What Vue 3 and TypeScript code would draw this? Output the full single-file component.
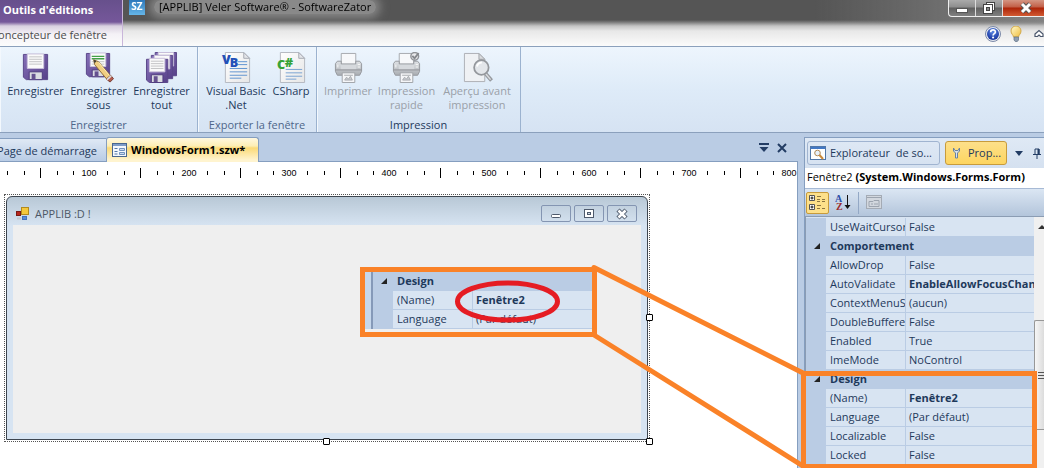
<script setup lang="ts">
interface Tool {
  icon: string
  lines: string[]
  width: string
  disabled?: boolean
}
interface Group {
  title: string
  tools: Tool[]
  dim?: boolean
}
interface Row {
  name: string
  value?: string
  bold?: boolean
  category?: boolean
}

const groups: Group[] = [
  {
    title: 'Enregistrer',
    dim: true,
    tools: [
      { icon: 'floppy', lines: ['Enregistrer'], width: 'w-m' },
      { icon: 'floppy-edit', lines: ['Enregistrer', 'sous'], width: 'w-m' },
      { icon: 'floppies', lines: ['Enregistrer', 'tout'], width: 'w-m' },
    ],
  },
  {
    title: 'Exporter la fenêtre',
    dim: true,
    tools: [
      { icon: 'vb', lines: ['Visual Basic', '.Net'], width: 'w-l' },
      { icon: 'cs', lines: ['CSharp'], width: 'w-s' },
    ],
  },
  {
    title: 'Impression',
    tools: [
      { icon: 'printer', lines: ['Imprimer'], width: 'w-n', disabled: true },
      { icon: 'printer-check', lines: ['Impression', 'rapide'], width: 'w-m', disabled: true },
      { icon: 'preview', lines: ['Aperçu avant', 'impression'], width: 'w-xl', disabled: true },
    ],
  },
]

const rows: Row[] = [
  { name: 'UseWaitCursor', value: 'False' },
  { name: 'Comportement', category: true },
  { name: 'AllowDrop', value: 'False' },
  { name: 'AutoValidate', value: 'EnableAllowFocusChange', bold: true },
  { name: 'ContextMenuStrip', value: '(aucun)' },
  { name: 'DoubleBuffered', value: 'False' },
  { name: 'Enabled', value: 'True' },
  { name: 'ImeMode', value: 'NoControl' },
  { name: 'Design', category: true },
  { name: '(Name)', value: 'Fenêtre2', bold: true },
  { name: 'Language', value: '(Par défaut)' },
  { name: 'Localizable', value: 'False' },
  { name: 'Locked', value: 'False' },
]

const insetRows: Row[] = rows.slice(8, 11)

const hundreds = [1, 2, 3, 4, 5, 6, 7, 8]
const shortTicks = [-82, -65, -32, -16]
</script>

<template>
  <div class="app">
    <svg class="defs" width="0" height="0" aria-hidden="true">
      <defs>
        <linearGradient id="gPurple" x1="0" y1="0" x2="1" y2="1">
          <stop offset="0" stop-color="#8670b8" /><stop offset="1" stop-color="#574089" />
        </linearGradient>
        <linearGradient id="gPaper" x1="0" y1="0" x2="1" y2="1">
          <stop offset="0" stop-color="#ffffff" /><stop offset="1" stop-color="#e6e6e6" />
        </linearGradient>
        <linearGradient id="gGrey" x1="0" y1="0" x2="0" y2="1">
          <stop offset="0" stop-color="#dfe2e5" /><stop offset="1" stop-color="#a9adb2" />
        </linearGradient>
        <radialGradient id="gHelp" cx=".5" cy=".3" r=".7">
          <stop offset="0" stop-color="#5d8ae6" /><stop offset="1" stop-color="#14309a" />
        </radialGradient>
        <linearGradient id="gBulb" x1="0" y1="0" x2="1" y2="1">
          <stop offset="0" stop-color="#fffbd0" /><stop offset="1" stop-color="#f0bd3c" />
        </linearGradient>
      </defs>
      <symbol id="floppy" viewBox="0 0 32 32">
        <path d="M3.5 2.500h25v26h-22l-3-2.500z" fill="url(#gPurple)" stroke="#5a4688" />
        <path d="M7.500 2h17v15h-17z" fill="#fafafa" stroke="#c9c1db" />
        <path d="M9.500 5h13M9.500 7.500h13M9.500 10h13M9.500 12.500h13" stroke="#c2c2c4" />
        <path d="M9.500 20.500h13.500v8h-13.500z" fill="#dcdde2" stroke="#4d3a7d" />
        <path d="M12 22.500h4v6h-4z" fill="#65518f" />
      </symbol>
      <symbol id="floppy-edit" viewBox="0 0 32 32">
        <path d="M3.500 1.500h24v24h-21l-3-2.500z" fill="url(#gPurple)" stroke="#5a4688" />
        <path d="M7.500 1h16v14h-16z" fill="#fafafa" stroke="#c9c1db" />
        <path d="M9 4.500h13M9 7h13" stroke="#43a047" stroke-width="1.500" />
        <path d="M9 10h13M9 12.500h13" stroke="#c2c2c4" />
        <path d="M9.500 18.500h12v7h-12z" fill="#dcdde2" stroke="#4d3a7d" />
        <path d="M12 20h4v5h-4z" fill="#65518f" />
        <path d="M11 8l5 2 12.500 14.500-4 3.500L12 13z" fill="#f0ce82" stroke="#8a6836" />
        <path d="M16 10.500L28 25" stroke="#fff0b8" />
        <path d="M24 28l4.500-4 3 3.500-3.500 3.500z" fill="#b45b4d" stroke="#754037" />
        <path d="M24 28l4.500-4 1.200 1.400-4.500 4z" fill="#dddddd" />
        <path d="M11 8l1 3.500 1.800-2z" fill="#333" />
      </symbol>
      <symbol id="page" viewBox="0 0 32 32">
        <path d="M4.500 .5h19l6 6v25h-25z" fill="url(#gPaper)" stroke="#b4b8c0" />
        <path d="M23.500 .5v6h6z" fill="#e4e6ea" stroke="#a5a9b2" />
      </symbol>
      <symbol id="printer" viewBox="0 0 32 32">
        <path d="M8.500 1.500h15v11h-15z" fill="#f7f8fa" stroke="#a6a9ae" />
        <path d="M4.500 9.500h4v3h15v-3h4l2 2.500v8l-2 4h-23l-2-4v-8z" fill="url(#gGrey)" stroke="#96999e" />
        <path d="M8 13h16v5H8z" fill="#d6d9dd" />
        <path d="M2.500 18.500h27" stroke="#8f9297" />
        <path d="M5 13v3M25.500 13h2.500M25.500 15.500h2.500" stroke="#f8f8f8" />
        <path d="M9.500 21.500h13v10h-13z" fill="#f5f6f8" stroke="#a0a3a8" />
        <path d="M11.500 24h9M12 29l2-3 2 2 2-3 2 4z" fill="#c8cbd0" stroke="#a9acb1" />
      </symbol>
    </svg>

    <header class="titlebar">
      <div class="context">
        <div class="context-title">Outils d'éditions</div>
        <button class="context-tab" type="button">Concepteur de fenêtre</button>
      </div>
      <div class="title-main">
        <div class="title-row">
          <span class="logo">SZ</span>
          <h1 class="title">[APPLIB] Veler Software® - SoftwareZator</h1>
          <div class="win-buttons">
            <button type="button" aria-label="Réduire">
              <svg width="14" height="14"><rect x="1.500" y="7.500" width="11" height="4" fill="#fff" stroke="#555" /></svg>
            </button>
            <button type="button" aria-label="Restaurer">
              <svg width="14" height="14"><rect x="4.500" y="1.500" width="8" height="8" fill="#fff" stroke="#444" /><rect x="1.500" y="3.500" width="9" height="9" fill="#fff" stroke="#444" /><rect x="4.500" y="6.500" width="3" height="3" fill="#8a8a8a" stroke="#444" /></svg>
            </button>
            <button class="close" type="button" aria-label="Fermer">
              <svg width="14" height="14" fill="none"><path d="M3 3l8 8M11 3l-8 8" stroke="#555" stroke-width="5" /><path d="M3 3l8 8M11 3l-8 8" stroke="#fff" stroke-width="3" /></svg>
            </button>
          </div>
        </div>
        <div class="help-row">
          <button type="button" aria-label="Aide">
            <svg width="16" height="16"><circle cx="8" cy="8" r="7.500" fill="#e8ebf2" stroke="#7b89a8" /><circle cx="8" cy="8" r="6" fill="url(#gHelp)" /><path d="M5.700 6.200c0-3 4.700-3 4.700-.2 0 1.600-2.300 1.700-2.300 3.400" fill="none" stroke="#fff" stroke-width="1.700" /><circle cx="8.100" cy="11.500" r="1.100" fill="#fff" /></svg>
          </button>
          <button type="button" aria-label="Astuce">
            <svg width="16" height="16"><path d="M5.500 11c0-2-2.500-3-2.500-6a5 5 0 0 1 10 0c0 3-2.500 4-2.500 6z" fill="url(#gBulb)" stroke="#d2a94a" /><path d="M6 11h4.500v3l-1.200 1.500h-2L6 14z" fill="#8f9eb0" stroke="#5f7186" stroke-width=".7" /></svg>
          </button>
          <button type="button" aria-label="Réduire le ruban">
            <svg width="16" height="16" fill="none"><path d="M4 8l4-3.500L12 8v2.500H9.500L8 9l-1.500 1.500H4z" fill="#fff" stroke="#4a566c" stroke-width="1.200" /></svg>
          </button>
        </div>
      </div>
    </header>

    <section class="ribbon" aria-label="Ruban">
      <div v-for="g in groups" :key="g.title" class="group">
        <div class="tools">
          <button v-for="t in g.tools" :key="t.icon" type="button" class="tool" :class="t.width" :disabled="t.disabled">
            <svg v-if="t.icon === 'floppy' || t.icon === 'floppy-edit'" class="icon" viewBox="0 0 32 32"><use :href="'#' + t.icon" /></svg>
            <svg v-else-if="t.icon === 'floppies'" class="icon wide" viewBox="0 0 34 32">
              <path d="M10.500 .5h22v24h-22z" fill="url(#gPurple)" stroke="#5a4688" />
              <path d="M13.500 .5h16v14h-16z" fill="#fafafa" stroke="#c9c1db" />
              <path d="M6.500 3.500h22v24h-22z" fill="url(#gPurple)" stroke="#5a4688" />
              <path d="M9.500 3.500h16v14h-16z" fill="#fafafa" stroke="#c9c1db" />
              <path d="M1.500 7.500h22v24h-19l-3-2.500z" fill="url(#gPurple)" stroke="#5a4688" />
              <path d="M4.500 6.500h16v14h-16z" fill="#fafafa" stroke="#c9c1db" />
              <path d="M6 9.500h13M6 12h13M6 14.500h13M6 17h13" stroke="#c2c2c4" />
              <path d="M6.500 23.500h12v8h-12z" fill="#dcdde2" stroke="#4d3a7d" />
              <path d="M9 25h4v6h-4z" fill="#65518f" />
            </svg>
            <svg v-else-if="t.icon === 'vb'" class="icon" viewBox="0 0 32 32">
              <use href="#page" />
              <path d="M17 10h10M17 13h10M9 17h18M9 20.500h18M9 24h18M9 27h12" stroke="#5f93cf" />
              <text class="glyph v" x="1" y="12">V</text><text class="glyph v" x="9" y="15">B</text>
            </svg>
            <svg v-else-if="t.icon === 'cs'" class="icon" viewBox="0 0 32 32">
              <use href="#page" />
              <path d="M10 18h17M10 21.500h17M10 25h17M10 28h11" stroke="#79a2d2" />
              <text class="glyph c" x="1" y="18">C</text><text class="glyph c" x="9" y="15">#</text>
            </svg>
            <svg v-else-if="t.icon === 'printer'" class="icon" viewBox="0 0 32 32"><use href="#printer" /></svg>
            <svg v-else-if="t.icon === 'printer-check'" class="icon" viewBox="0 0 32 32">
              <use href="#printer" />
              <circle cx="24.500" cy="4.500" r="4" fill="#e9eaec" stroke="#909398" stroke-width="1.500" />
              <path d="M22 4l2.300 2.500L28.500 1" fill="none" stroke="#85888d" stroke-width="2" />
            </svg>
            <svg v-else class="icon" viewBox="0 0 32 32">
              <path d="M2.500 1.500h15l6 6v23h-21z" fill="#eff1f4" stroke="#adb0b5" />
              <path d="M17.500 1.500v6h6z" fill="#d9dbde" stroke="#a2a5aa" />
              <path d="M24 22l6.500 7.500" stroke="#96999e" stroke-width="4" />
              <path d="M24.500 22.500l5 6" stroke="#dadcdf" stroke-width="1.500" />
              <circle cx="20" cy="16" r="7.500" fill="#e3e6ea" stroke="#94979c" stroke-width="1.800" />
              <path d="M15.500 15a5 5 0 0 1 5-4" fill="none" stroke="#fff" stroke-width="2" />
            </svg>
            <span v-for="l in t.lines" :key="l" class="tool-line">{{ l }}</span>
          </button>
        </div>
        <div class="group-title" :class="{ dim: g.dim }">{{ g.title }}</div>
      </div>
    </section>

    <div class="workspace">
      <main class="editor">
        <div class="doc-tabs">
          <button type="button" class="doc-tab start">Page de démarrage</button>
          <button type="button" class="doc-tab active">
            <svg width="15" height="14"><rect x=".5" y=".5" width="14" height="13" fill="#f4f8fd" stroke="#49678f" /><path d="M1 2h13" stroke="#7d9cc8" stroke-width="2" /><path d="M2.500 5.500h3M2.500 8.500h3M2.500 11h3" stroke="#5479a8" /><path d="M7.500 5.500h5v2h-5zM7.500 9.500h5v2h-5z" fill="#cddcf0" stroke="#7192bd" /></svg>
            WindowsForm1.szw*
          </button>
          <div class="doc-actions">
            <button type="button" aria-label="Documents ouverts">
              <svg width="12" height="12"><path d="M1 2h10" stroke="#223c64" stroke-width="2" /><path d="M1.500 5h9L6 10z" fill="#223c64" /></svg>
            </button>
            <button type="button" aria-label="Fermer le document">
              <svg width="12" height="12"><path d="M2 2l8 8M10 2l-8 8" stroke="#223c64" stroke-width="2" /></svg>
            </button>
          </div>
        </div>
        <div class="canvas">
          <svg class="ruler" height="18" aria-hidden="true">
            <g v-for="h in hundreds" :key="h" :transform="`translate(${h * 100 - 11} 0)`">
              <path v-for="s in shortTicks" :key="s" :d="`M${s + 0.5} 6v4`" />
              <path d="M-48.500 3v10" />
              <text x="0" y="11" text-anchor="middle">{{ h }}00</text>
            </g>
          </svg>
          <div class="selection">
            <div class="form">
              <div class="form-title">
                <svg width="14" height="13"><rect x="5.500" y=".5" width="7" height="7" fill="#f5c83c" stroke="#b38a1c" /><rect x=".5" y="4.500" width="4" height="4" fill="#b8271d" stroke="#7b1a15" /><rect x="6.500" y="9.500" width="4" height="3" fill="#5a8cd8" stroke="#4372bd" /><path d="M1 11.500h4" stroke="#c4c8ce" stroke-width="2" /></svg>
                <span class="form-name">APPLIB :D !</span>
                <button type="button" aria-label="Réduire la fenêtre"><svg width="12" height="12"><rect x="1.500" y="6.500" width="9" height="3" rx="1" fill="#fff" stroke="#4e5a6c" /></svg></button>
                <button type="button" aria-label="Agrandir la fenêtre"><svg width="12" height="12"><rect x="1.500" y="1.500" width="9" height="8" fill="#fff" stroke="#4e5a6c" /><rect x="4.500" y="4.500" width="3" height="2" fill="#cbd6e3" stroke="#4e5a6c" /></svg></button>
                <button type="button" aria-label="Fermer la fenêtre"><svg width="12" height="12"><path d="M2 2l8 8M10 2l-8 8" stroke="#4e5a6c" stroke-width="4.500" /><path d="M2.500 2.500l7 7M9.500 2.500l-7 7" stroke="#fff" stroke-width="2.500" /></svg></button>
              </div>
              <div class="form-client"></div>
            </div>
            <i class="handle right"></i><i class="handle bottom"></i><i class="handle corner"></i>
          </div>
          <div class="inset">
            <table class="props">
              <colgroup><col class="c-gutter" /><col class="c-name" /><col /></colgroup>
              <tbody>
                <tr v-for="r in insetRows" :key="r.name" :class="{ category: r.category }">
                  <td class="gutter"><svg v-if="r.category" width="6" height="6"><path d="M6 0v6H0z" fill="#222" /></svg></td>
                  <th :colspan="r.category ? 2 : 1" scope="row">{{ r.name }}</th>
                  <td v-if="!r.category" :class="{ bold: r.bold }">{{ r.value }}</td>
                </tr>
              </tbody>
            </table>
          </div>
        </div>
      </main>

      <aside class="panel">
        <div class="panel-tabs">
          <button type="button" class="panel-tab explorer">
            <svg width="16" height="15"><rect x=".5" y=".5" width="15" height="13" fill="#fff" stroke="#5177a8" /><path d="M1 2h14" stroke="#4278c4" stroke-width="2" /><circle cx="7.500" cy="7" r="2.800" fill="#e8f2fc" stroke="#b28a56" /><path d="M9.500 9l3.500 4" stroke="#c98a3c" stroke-width="2" /></svg>
            Explorateur&nbsp; de so...
          </button>
          <button type="button" class="panel-tab current">
            <svg width="9" height="12"><path d="M1.500 1v3l2 2v5h2V6l2-2V1L6 3.500H3z" fill="#d7e3f1" stroke="#68829f" /></svg>
            Prop...
          </button>
          <button type="button" class="mini" aria-label="Menu du volet"><svg width="8" height="5"><path d="M0 0h8L4 5z" fill="#223c64" /></svg></button>
          <button type="button" class="mini pin" aria-label="Épingler"><svg width="8" height="11" fill="none"><path d="M2 6V1h4v5M0 6.500h8M4 7v4" stroke="#223c64" /><path d="M5.500 1v5" stroke="#223c64" stroke-width="2" /></svg></button>
        </div>
        <button type="button" class="object-select" aria-haspopup="listbox">Fenêtre2 <b>(System.Windows.Forms.Form)</b></button>
        <div class="prop-tools">
          <button type="button" class="pt on" aria-label="Par catégorie">
            <svg width="17" height="17" fill="none"><path d="M.5 1.500h5v5h-5zM.5 10.500h5v5h-5z" fill="#fff" stroke="#555" /><path d="M1.500 4h3M3 2.500v3M1.500 13h3M3 11.500v3" stroke="#111" /><path d="M8 2.500h4M8 5.500h3M8 7.500h3M8 11.500h4M8 14.500h3M13 5.500h3M13 7.500h3M13 14.500h3" stroke="#8c7540" /></svg>
          </button>
          <button type="button" class="pt" aria-label="Alphabétique">
            <svg width="17" height="17"><text class="az a" x="0" y="8">A</text><text class="az z" x="1" y="16">Z</text><path d="M12.500 1v12" stroke="#111" /><path d="M9.500 11h6l-3 4z" fill="#111" /></svg>
          </button>
          <i class="divider"></i>
          <button type="button" class="pt" aria-label="Pages de propriétés" disabled>
            <svg width="16" height="15"><rect x=".5" y=".5" width="15" height="13" fill="#d2d7de" stroke="#a4abb5" /><path d="M1 2.500h14M3 6.500h4l1 -1h5v6H3z" fill="none" stroke="#9ca4af" /><path d="M5 9h2M8 9h4" stroke="#9ca4af" /></svg>
          </button>
        </div>
        <div class="prop-area">
          <table class="props">
            <colgroup><col class="c-gutter" /><col class="c-name" /><col /></colgroup>
            <tbody>
              <tr v-for="r in rows" :key="r.name" :class="{ category: r.category }">
                <td class="gutter"><svg v-if="r.category" width="6" height="6"><path d="M6 0v6H0z" fill="#222" /></svg></td>
                <th :colspan="r.category ? 2 : 1" scope="row">{{ r.name }}</th>
                <td v-if="!r.category" :class="{ bold: r.bold }">{{ r.value }}</td>
              </tr>
            </tbody>
          </table>
          <div class="scrollbar">
            <svg width="10" height="20"><path d="M4 12l4-4 4 4z" fill="#333" /></svg>
            <div class="thumb"><i></i><i></i><i></i></div>
          </div>
        </div>
      </aside>
    </div>

    <svg class="notes" width="1044" height="468" fill="none" aria-hidden="true">
      <g stroke="#fa8228" stroke-width="5">
        <rect x="362.500" y="269.500" width="232" height="65" />
        <rect x="803.500" y="373.500" width="231" height="93" />
        <path d="M594 267.500L803 373M594 335L803 466" stroke-linecap="round" />
      </g>
      <ellipse cx="507.500" cy="301.500" rx="50" ry="18.500" stroke="#e51c23" stroke-width="5" />
    </svg>
  </div>
</template>

<style>
html,
body {
  background: #bacde5;
}
</style>

<style scoped>
* {
  box-sizing: border-box;
}
.app {
  position: relative;
  display: flex;
  flex-direction: column;
  height: 100vh;
  overflow: hidden;
  background: #bacce4;
  color: #1e395b;
  font: 11px/14px 'Open Sans', 'Noto Sans', sans-serif;
}
button {
  margin: 0;
  padding: 0;
  border: 0;
  background: none;
  color: inherit;
  font: inherit;
}
svg {
  display: block;
  flex: none;
}
.defs {
  position: absolute;
}
.titlebar {
  display: flex;
  flex: none;
  height: 47px;
  border-bottom: 1px solid #8ba0bc;
  background: linear-gradient(#555 0, #555 20px, #777 22px, #c4c4c4 26px, #e8e8e8 31px, #fbfbfb 46px);
}
.context {
  width: 123px;
  border-right: 1px solid #c9b6da;
  background: linear-gradient(#67508c, #75579a 22px, #d9d0e0 26px, #f4f1f6 34px, #fcfcfc);
}
.context-title {
  padding: 3px 3px 0;
  height: 22px;
  color: #fff;
  font-weight: 700;
  white-space: nowrap;
}
.context-tab {
  display: flex;
  justify-content: flex-end;
  width: 100%;
  padding: 6px 15px 0 0;
  overflow: hidden;
  color: #4c4c4c;
  white-space: nowrap;
}
.title-main {
  display: flex;
  flex: 1;
  flex-direction: column;
  min-width: 0;
}
.title-row {
  display: flex;
  height: 24px;
  padding-left: 6px;
  background: linear-gradient(90deg, transparent 75%, rgba(200, 200, 200, 0.4));
  mask-image: linear-gradient(#000 20px, transparent);
}
.logo {
  width: 16px;
  height: 15px;
  background: linear-gradient(#2c78bc, #65b6e8);
  color: #fff;
  font-size: 10px;
  font-weight: 700;
  line-height: 13px;
  text-align: center;
}
.title {
  margin: 0 0 0 9px;
  padding: 0 5px;
  height: 14px;
  border-radius: 7px;
  background: rgba(190, 190, 190, 0.5);
  box-shadow: 0 0 10px 4px rgba(190, 190, 190, 0.5);
  color: #000;
  font-size: 11px;
  font-weight: 400;
  line-height: 14px;
  white-space: nowrap;
}
.win-buttons {
  display: flex;
  height: 17px;
  margin-left: auto;
  border: 1px solid #eee;
  border-width: 0 0 1px 1px;
  border-radius: 0 0 0 4px;
  background: linear-gradient(#aaa, #8e8e8e 7px, #606060 8px, #808080);
  overflow: hidden;
}
.win-buttons button {
  display: flex;
  align-items: center;
  justify-content: center;
  width: 27px;
  border-right: 1px solid #ddd;
}
.win-buttons .close {
  width: 41px;
  padding-left: 5px;
  border: 0;
  background: linear-gradient(#d49583, #c25f47 7px, #ac2409 8px, #d25a32);
}
.help-row {
  display: flex;
  flex: 1;
  justify-content: flex-end;
  gap: 7px;
  padding-top: 2px;
  margin-right: -3px;
}
.help-row button {
  height: 16px;
}
.ribbon {
  display: flex;
  flex: none;
  height: 86px;
  border-bottom: 1px solid #8ba0bc;
  background: linear-gradient(#edf5fd, #deebf8 50%, #d6e3f3);
}
.group {
  display: flex;
  flex-direction: column;
  justify-content: space-between;
  padding: 5px 4px 0;
  border-right: 1px solid #9bb2cf;
  box-shadow: inset 1px 0 #f3f8fd;
}
.tools {
  display: flex;
}
.tool {
  display: flex;
  flex-direction: column;
  align-items: center;
  justify-content: flex-start;
  white-space: nowrap;
}
.w-s { width: 42px; }
.w-n { width: 54px; }
.w-m { width: 63px; }
.w-l { width: 68px; }
.w-xl { width: 78px; }
.tool:disabled {
  color: #9aa0a8;
}
.icon {
  width: 31px;
  height: 31px;
  margin-bottom: 1px;
}
.icon.wide {
  width: 33px;
}
.tool-line {
  display: block;
  height: 14px;
}
.glyph {
  font-family: 'Open Sans', sans-serif;
  font-size: 13px;
  font-weight: 800;
}
.glyph.v { fill: #2350b8; }
.glyph.c { fill: #36a336; }
.group-title {
  color: #1e395b;
  text-align: center;
}
.group-title.dim {
  color: #4e668a;
}
.workspace {
  display: flex;
  flex: 1;
  min-height: 0;
}
.editor {
  display: flex;
  flex: 1;
  flex-direction: column;
  min-width: 0;
}
.doc-tabs {
  display: flex;
  flex: none;
  align-items: flex-end;
  height: 29px;
  border-bottom: 1px solid #859ebf;
}
.doc-tab {
  display: flex;
  align-items: center;
  white-space: nowrap;
}
.doc-tab.start {
  justify-content: flex-end;
  width: 106px;
  height: 23px;
  padding: 2px 9px 0 0;
  overflow: hidden;
  border: 1px solid #859ebf;
  border-width: 1px 0 0;
  background: linear-gradient(#dfe9f5, #b9cce5);
}
.doc-tab.active {
  gap: 4px;
  width: 153px;
  height: 25px;
  margin-bottom: -1px;
  padding: 0 0 0 5px;
  border: 1px solid #859ebf;
  border-bottom: 0;
  border-radius: 3px 3px 0 0;
  background: linear-gradient(#fff8e0, #fdeeb4 8px, #fbda77 10px, #fff4cf 22px);
  color: #000;
  font-weight: 700;
}
.doc-actions {
  display: flex;
  gap: 6px;
  margin-left: auto;
  padding: 0 10px 7px 0;
}
.canvas {
  position: relative;
  flex: 1;
  overflow: hidden;
  border-right: 1px solid #859ebf;
  background: #fff;
}
.ruler {
  width: 100%;
  margin-top: 3px;
}
.ruler path {
  stroke: #000;
}
.ruler text {
  fill: #000;
  font: 9px 'Liberation Sans', sans-serif;
}
.selection {
  position: relative;
  width: 646px;
  margin: 11px 0 0 4px;
  border: 1px dotted #555;
}
.form {
  display: flex;
  flex-direction: column;
  height: 244px;
  margin: 1px;
  padding: 0 6px 6px;
  border: 1px solid #3e4650;
  border-radius: 6px 6px 0 0;
  background: linear-gradient(#b8c8d6, #d7e4f2 29px);
}
.form-title {
  display: flex;
  align-items: center;
  gap: 4px;
  height: 28px;
  padding: 5px 5px 0 3px;
  color: #4d5866;
}
.form-name {
  flex: 1;
  padding-left: 1px;
}
.form-title button {
  display: flex;
  align-items: center;
  justify-content: center;
  width: 30px;
  height: 17px;
  margin-right: -1px;
  border: 1px solid #8495b2;
  border-radius: 2px;
}
.form-client {
  flex: 1;
  background: #efefef;
}
.handle {
  position: absolute;
  width: 7px;
  height: 7px;
  border: 1px solid #000;
  border-radius: 1px;
  background: #fff;
}
.handle.right { right: -4px; top: calc(50% - 4px); }
.handle.bottom { left: calc(50% - 4px); bottom: -4px; }
.handle.corner { right: -4px; bottom: -4px; }
.inset {
  position: absolute;
  top: 110px;
  left: 365px;
  width: 227px;
  padding-left: 6px;
  background: #c6d7eb;
}
.inset .props {
  border-left: 2px solid #8599b8;
}
.props {
  width: 100%;
  table-layout: fixed;
  border-collapse: separate;
  border-spacing: 0;
  background: #d8e4f2;
}
.c-gutter { width: 20px; }
.c-name { width: 80px; }
.props tr {
  height: 19px;
}
.props th,
.props td {
  height: 19px;
  padding: 0 0 0 4px;
  overflow: hidden;
  border-bottom: 1px solid #bacce4;
  font-weight: 400;
  line-height: 18px;
  text-align: left;
  white-space: nowrap;
}
.props th {
  border-right: 1px solid #bacce4;
}
.props td {
  padding-left: 3px;
}
.props .gutter {
  padding: 0 0 0 8px;
  background: #bacce4;
}
.props .category th {
  background: #bacce4;
  font-weight: 700;
}
.props .bold {
  font-weight: 700;
}
.panel {
  display: flex;
  flex: none;
  flex-direction: column;
  width: 240px;
  margin: 4px 0 0 6px;
  overflow: hidden;
  border: 1px solid #859ebf;
  border-width: 1px 0 0 1px;
}
.panel-tabs {
  display: flex;
  flex: none;
  align-items: center;
  height: 30px;
  padding-left: 2px;
  background: linear-gradient(#dfe9f5, #d5e1f0);
}
.panel-tab {
  display: flex;
  align-items: center;
  height: 24px;
  border: 1px solid #a0b4d0;
  border-radius: 3px;
  white-space: nowrap;
}
.panel-tab.explorer {
  gap: 4px;
  width: 133px;
  padding-left: 2px;
}
.panel-tab.current {
  gap: 7px;
  width: 62px;
  margin-left: 5px;
  padding-left: 6px;
  border-color: #c79b3c;
  background: linear-gradient(#fde08a, #fdd560);
}
.mini {
  margin-left: 8px;
}
.mini.pin {
  margin-left: 10px;
}
.object-select {
  flex: none;
  height: 21px;
  padding: 0 2px 2px;
  border-bottom: 1px solid #a7bad5;
  background: #fff;
  color: #000;
  text-align: left;
  white-space: nowrap;
}
.prop-tools {
  display: flex;
  flex: none;
  align-items: center;
  gap: 3px;
  height: 28px;
  padding-left: 1px;
  border-bottom: 1px solid #8b9cb3;
  background: linear-gradient(#dbe6f3, #b3c5db);
}
.pt {
  display: flex;
  align-items: center;
  justify-content: center;
  width: 23px;
  height: 22px;
}
.pt.on {
  border: 1px solid #c79b3c;
  border-radius: 2px;
  background: #fde08a;
}
.divider {
  width: 1px;
  height: 22px;
  background: #93a8c5;
}
.az {
  font: 700 10px 'Liberation Serif', serif;
}
.az.a { fill: #2d4fa8; }
.az.z { fill: #9c2c2c; }
.prop-area {
  display: flex;
  flex: 1;
  align-items: flex-start;
  min-height: 0;
  border-left: 1px solid #8b9cb3;
  background: #d8e4f2;
}
.prop-area .props {
  flex: 1;
  min-width: 0;
  margin-top: 1px;
}
.scrollbar {
  flex: none;
  width: 10px;
  height: 100%;
  overflow: hidden;
  background: #f0f0f0;
}
.thumb {
  display: flex;
  flex-direction: column;
  align-items: flex-end;
  justify-content: center;
  gap: 2px;
  height: 110px;
  margin-top: 83px;
  border: 1px solid #979797;
  border-right: 0;
  border-radius: 2px 0 0 2px;
  background: linear-gradient(90deg, #f6f6f6, #dcdcdc);
}
.thumb i {
  width: 6px;
  height: 1px;
  background: #555;
}
.notes {
  position: absolute;
  top: 0;
  left: 0;
  pointer-events: none;
}
</style>
